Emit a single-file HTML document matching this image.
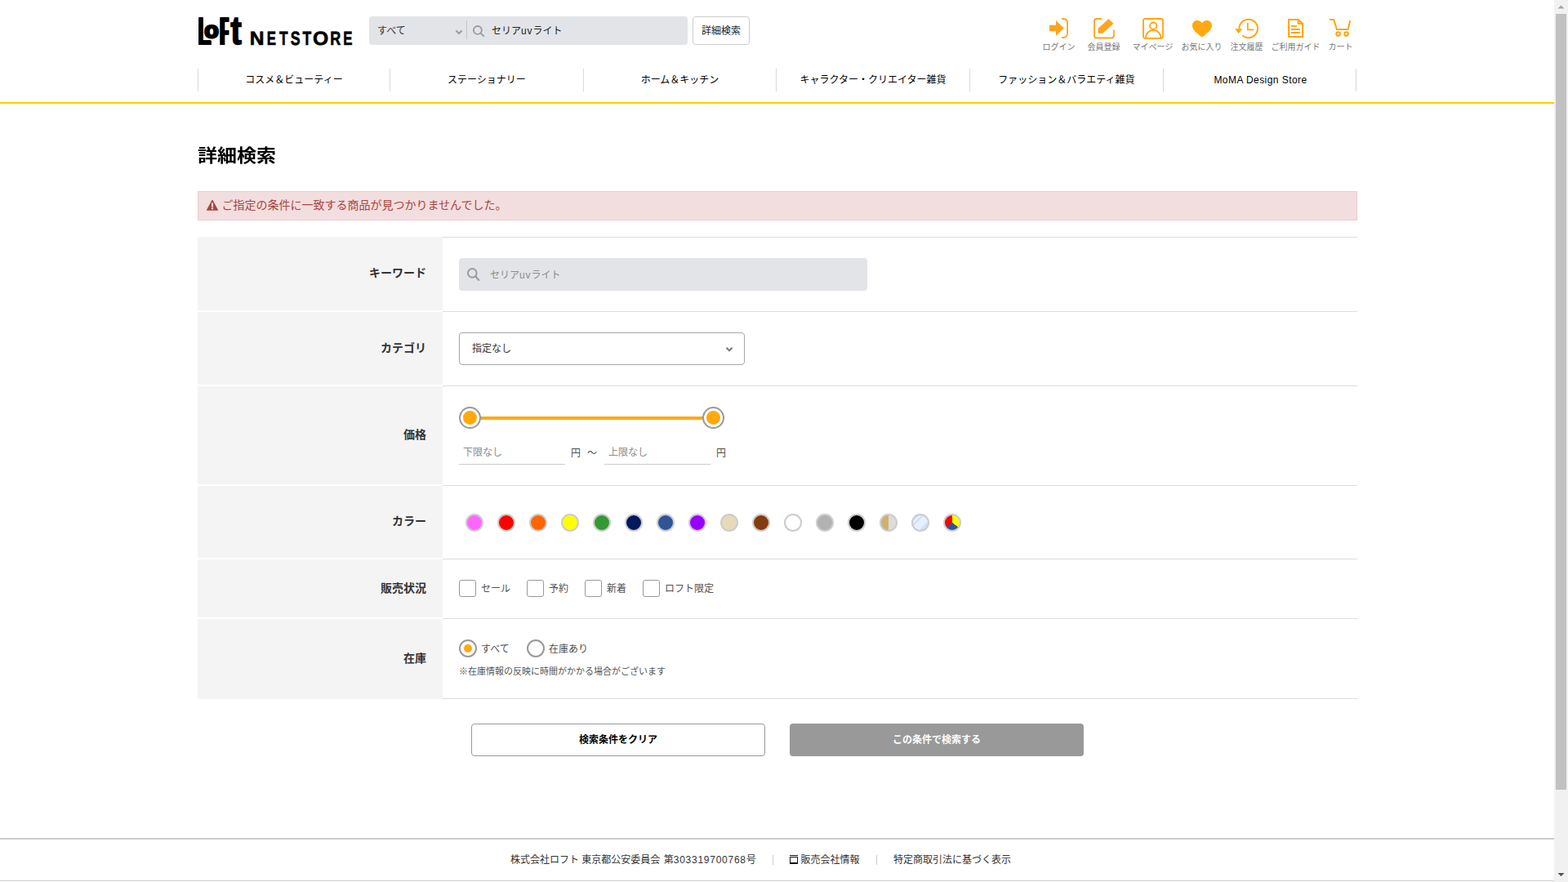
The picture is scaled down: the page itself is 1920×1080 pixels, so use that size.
<!DOCTYPE html>
<html lang="ja">
<head>
<meta charset="utf-8">
<title>詳細検索 | ロフトネットストア</title>
<style>
*{box-sizing:border-box;margin:0;padding:0}
html,body{width:1920px;height:1080px;overflow:hidden;background:#fff}
body{font-family:"Liberation Sans","Noto Sans CJK JP",sans-serif;font-size:12px;color:#222;position:relative}
.abs,#page *{position:absolute}
#page{position:absolute;left:0;top:0;width:1920px;height:1080px;overflow:hidden}
.t{white-space:nowrap;line-height:20px;height:20px;margin-top:1px}
.lt{letter-spacing:0.9px}
/* header */
#sbox{left:452px;top:20px;width:390px;height:35px;background:#e3e4e8;border-radius:4px}
#sbox .sep{left:119px;top:5px;width:1px;height:23px;background:#c4c5c9}
#sbtn{left:848px;top:20px;width:70px;height:35px;border:1px solid #ccc;border-radius:4px;background:#fff}
.hi{top:20px;height:30px}
.hl{top:51px;font-size:10px;color:#787878;line-height:14px;height:14px;white-space:nowrap;text-align:center;transform:translateX(-50%)}
/* nav */
.nsep{top:84px;width:1px;height:28px;background:#d9d9d9}
.nt{top:88px;width:236px;text-align:center;font-size:12px;line-height:20px;color:#000;white-space:nowrap}
#yline{left:0;top:125px;width:1903px;height:2px;background:#fdce00}
/* title */
#title{left:242px;top:173px;font-size:24px;font-weight:bold;line-height:36px;color:#000;white-space:nowrap;transform:scaleY(0.89);transform-origin:50% 47%}
#alert{left:242px;top:234px;width:1420px;height:36px;background:#f2dede;border:1px solid #ebccd1}
#alert .t{left:28.5px;top:3.5px;font-size:14px;color:#a94442;line-height:22px;height:22px}
/* form */
.lab{left:242px;width:300px;background:#f4f4f4}
.lab span{right:20px;font-size:14px;font-weight:bold;color:#333;line-height:20px;white-space:nowrap}
.ln{left:542px;width:1120px;height:1px;background:#ddd}
.pin{width:130px;height:30px;border-bottom:1px solid #ccc}
.cc{width:22px;height:22px;border-radius:50%;border:2px solid #ccc}
.cb{width:21px;height:21px;border:1px solid #999;border-radius:3px;background:#fff}
.rd{width:22px;height:22px;border:2px solid #999;border-radius:50%;background:#fff}
.rd i{left:4px;top:4px;width:10px;height:10px;border-radius:50%;background:#ffa90e}
/* footer */
#fline{left:0;top:1026px;width:1903px;height:2px;background:#ccc}
#fline2{left:0;top:1078px;width:1903px;height:1px;background:#ccc}
.ft{top:1043px;font-size:12px;line-height:20px;color:#333;white-space:nowrap}
/* scrollbar */
#sb{left:1903px;top:0;width:17px;height:1080px;background:#f1f1f1}
#sb .th{left:2px;top:17px;width:13px;height:950px;background:#c1c1c1}
</style>
</head>
<body>
<div id="page">

<!-- HEADER -->
<svg id="logo" style="left:238px;top:14px" width="200" height="46" viewBox="0 0 200 46" font-family="Liberation Sans, sans-serif" fill="#000"><g style="filter:drop-shadow(1px 0 0 #000) drop-shadow(-1px 0 0 #000)"><text transform="matrix(1.3494 0 0 2.4600 4.14 40.80)" font-size="20" font-weight="bold" text-rendering="geometricPrecision">L</text></g><text transform="matrix(1.4361 0 0 1.3734 12.33 32.03)" font-size="20" font-weight="bold" text-rendering="geometricPrecision" stroke="#000" stroke-width="1.9" vector-effect="non-scaling-stroke" stroke-linejoin="miter" stroke-miterlimit="1.5">o</text><g style="filter:drop-shadow(1px 0 0 #000) drop-shadow(1px 0 0 #000) drop-shadow(-1px 0 0 #000) drop-shadow(-1px 0 0 #000)"><text transform="matrix(0.7343 0 0 2.4600 32.27 40.80)" font-size="20" font-weight="bold" text-rendering="geometricPrecision">F</text></g><text transform="matrix(2.0577 0 0 2.4580 44.30 39.87)" font-size="20" font-weight="bold" text-rendering="geometricPrecision" stroke="#000" stroke-width="0.6" vector-effect="non-scaling-stroke" stroke-linejoin="miter" stroke-miterlimit="1.5">t</text><text transform="matrix(1.2290 0 0 1.1737 67.63 40.52)" font-size="20" font-weight="bold" text-rendering="geometricPrecision" stroke="#000" stroke-width="0.55" vector-effect="non-scaling-stroke" stroke-linejoin="miter" stroke-miterlimit="1.5">N</text><text transform="matrix(0.8422 0 0 1.1737 88.75 40.52)" font-size="20" font-weight="bold" text-rendering="geometricPrecision" stroke="#000" stroke-width="0.55" vector-effect="non-scaling-stroke" stroke-linejoin="miter" stroke-miterlimit="1.5">E</text><text transform="matrix(0.8618 0 0 1.1737 103.98 40.52)" font-size="20" font-weight="bold" text-rendering="geometricPrecision" stroke="#000" stroke-width="0.55" vector-effect="non-scaling-stroke" stroke-linejoin="miter" stroke-miterlimit="1.5">T</text><text transform="matrix(0.8888 0 0 1.1829 117.76 40.59)" font-size="20" font-weight="bold" text-rendering="geometricPrecision" stroke="#000" stroke-width="0.55" vector-effect="non-scaling-stroke" stroke-linejoin="miter" stroke-miterlimit="1.5">S</text><text transform="matrix(0.8788 0 0 1.1737 132.38 40.52)" font-size="20" font-weight="bold" text-rendering="geometricPrecision" stroke="#000" stroke-width="0.55" vector-effect="non-scaling-stroke" stroke-linejoin="miter" stroke-miterlimit="1.5">T</text><text transform="matrix(1.2342 0 0 1.1829 145.06 40.59)" font-size="20" font-weight="bold" text-rendering="geometricPrecision" stroke="#000" stroke-width="0.55" vector-effect="non-scaling-stroke" stroke-linejoin="miter" stroke-miterlimit="1.5">O</text><text transform="matrix(0.9019 0 0 1.1737 166.27 40.52)" font-size="20" font-weight="bold" text-rendering="geometricPrecision" stroke="#000" stroke-width="0.55" vector-effect="non-scaling-stroke" stroke-linejoin="miter" stroke-miterlimit="1.5">R</text><text transform="matrix(0.8422 0 0 1.1737 182.15 40.52)" font-size="20" font-weight="bold" text-rendering="geometricPrecision" stroke="#000" stroke-width="0.55" vector-effect="non-scaling-stroke" stroke-linejoin="miter" stroke-miterlimit="1.5">E</text></svg>
<div id="sbox">
  <div class="t" style="left:10px;top:7px;font-size:12px;color:#333">すべて</div>
  <svg style="left:105px;top:16px" width="10" height="8" viewBox="0 0 10 8"><path d="M1.3 1.4 L4.9 5 L8.6 1.4" fill="none" stroke="#999" stroke-width="2"/></svg>
  <div class="sep"></div>
  <svg style="left:125px;top:10px" width="18" height="18" viewBox="0 0 18 18"><circle cx="7.85" cy="6.9" r="4.95" fill="none" stroke="#9c9c9c" stroke-width="1.9"/><path d="M11.4 10.4 L15.1 14.1" stroke="#9c9c9c" stroke-width="2" stroke-linecap="round"/></svg>
  <div class="t" style="left:150px;top:7px;font-size:12px;color:#222">セリア<span class="lt" style="position:static">uv</span>ライト</div>
</div>
<div id="sbtn"><div class="t" style="left:0;top:6px;width:68px;text-align:center;font-size:12px;color:#222">詳細検索</div></div>
<svg class="hi" style="left:1284px" width="26" height="30" viewBox="0 0 26 30"><path d="M1 10.8 H9 V5 L18.8 14.5 L9 24 V18.2 H1 Z" fill="#fba51f"/><path d="M16.2 3 H18 Q23 3 23 8.5 V20.5 Q23 26 18 26 H16.2" fill="none" stroke="#fba51f" stroke-width="1.8"/></svg>
<div class="hl" style="left:1296.5px">ログイン</div>
<svg class="hi" style="left:1338px" width="28" height="30" viewBox="0 0 28 30"><path d="M11 3 H5 Q2 3 2 6 V23.5 Q2 26.5 5 26.5 H23 Q26 26.5 26 23.5 V16.5" fill="none" stroke="#fba51f" stroke-width="1.8"/><path d="M6.5 20.7 V14.9 L19.5 3 L25.4 9 L12.3 20.7 Z" fill="#fba51f"/></svg>
<div class="hl" style="left:1351.5px">会員登録</div>
<svg class="hi" style="left:1398px" width="28" height="30" viewBox="0 0 28 30"><rect x="2" y="3" width="24" height="23.8" rx="2" fill="none" stroke="#ffa40a" stroke-width="1.8"/><circle cx="14.2" cy="11.7" r="4.2" fill="none" stroke="#ffa40a" stroke-width="1.8"/><path d="M5 26.6 C5 20.6 9 17 14.2 17 C19.4 17 23.4 20.6 23.4 26.6" fill="none" stroke="#ffa40a" stroke-width="1.8"/></svg>
<div class="hl" style="left:1411.5px">マイページ</div>
<svg class="hi" style="left:1459px" width="26" height="30" viewBox="0 0 26 30"><path d="M12.9 24.9 Q11.5 24.9 9.9 23.4 C6 20 0.9 16.5 0.9 11 C0.9 7.5 3.7 4.9 7 4.9 C9.6 4.9 11.6 6.2 12.9 8.3 C14.2 6.2 16.2 4.9 18.8 4.9 C22.1 4.9 24.9 7.5 24.9 11 C24.9 16.5 19.8 20 15.9 23.4 Q14.3 24.9 12.9 24.9 Z" fill="#ffa90e"/></svg>
<div class="hl" style="left:1471.5px">お気に入り</div>
<svg class="hi" style="left:1511px" width="32" height="30" viewBox="0 0 32 30"><path d="M6.5 15.4 A11.25 11.25 0 1 1 10.3 23.4" fill="none" stroke="#ffa40a" stroke-width="1.9"/><path d="M1 15.2 H10.4 L5.7 21 Z" fill="#ffa40a"/><path d="M16.8 8 V16.4 H23.9" fill="none" stroke="#ffa40a" stroke-width="1.7"/></svg>
<div class="hl" style="left:1526.5px">注文履歴</div>
<svg class="hi" style="left:1575px" width="24" height="30" viewBox="0 0 24 30"><path d="M3.1 3.9 H14.4 L20.1 9 V24.95 H3.1 Z" fill="none" stroke="#ffa40a" stroke-width="2"/><path d="M14 3.9 V9.4 H20.1 Z" fill="#ffa40a" stroke="#ffa40a" stroke-width="0.8"/><circle cx="15.9" cy="7.5" r="0.7" fill="#fff"/><path d="M6 11.9 H13 M6 16 H16.9 M6 20 H16.9" stroke="#ffa40a" stroke-width="1.9"/></svg>
<div class="hl" style="left:1586.5px">ご利用ガイド</div>
<svg class="hi" style="left:1627px" width="28" height="30" viewBox="0 0 28 30"><path d="M1 4 H6.2 L9.9 16 H23.6 L26.3 5.2" fill="none" stroke="#ffa40a" stroke-width="2"/><circle cx="11.6" cy="21.5" r="2.35" fill="none" stroke="#ffa40a" stroke-width="2"/><circle cx="21.5" cy="21.5" r="2.35" fill="none" stroke="#ffa40a" stroke-width="2"/></svg>
<div class="hl" style="left:1641.5px">カート</div>
<div class="nsep" style="left:242px"></div>
<div class="nsep" style="left:477px"></div>
<div class="nsep" style="left:714px"></div>
<div class="nsep" style="left:950px"></div>
<div class="nsep" style="left:1187px"></div>
<div class="nsep" style="left:1424px"></div>
<div class="nsep" style="left:1660px"></div>
<div class="nt" style="left:243px;width:234px">コスメ＆ビューティー</div>
<div class="nt" style="left:478px;width:236px">ステーショナリー</div>
<div class="nt" style="left:715px;width:235px">ホーム＆キッチン</div>
<div class="nt" style="left:951px;width:236px">キャラクター・クリエイター雑貨</div>
<div class="nt" style="left:1188px;width:236px">ファッション＆バラエティ雑貨</div>
<div class="nt" style="left:1426px;top:88px;width:235px;letter-spacing:0.44px">MoMA Design Store</div>

<div id="yline"></div>

<!-- MAIN -->
<div id="title">詳細検索</div>
<div id="alert"><svg style="left:8.5px;top:8.5px" width="16" height="15" viewBox="0 0 16 15"><path d="M8 1 L14.6 13.2 H1.4 Z" fill="#a94442" stroke="#a94442" stroke-width="1" stroke-linejoin="round"/><rect x="6.9" y="4.4" width="2.2" height="5" fill="#f2dede"/><rect x="6.9" y="10.3" width="2.2" height="2" fill="#f2dede"/></svg><div class="t">ご指定の条件に一致する商品が見つかりませんでした。</div></div>
<div class="lab" style="top:290px;height:90px"><span style="top:33.5px">キーワード</span></div>
<div class="lab" style="top:382px;height:89px"><span style="top:33.5px">カテゴリ</span></div>
<div class="lab" style="top:473px;height:120px"><span style="top:49px">価格</span></div>
<div class="lab" style="top:595px;height:88px"><span style="top:33px">カラー</span></div>
<div class="lab" style="top:685px;height:71px"><span style="top:25px">販売状況</span></div>
<div class="lab" style="top:758px;height:98px"><span style="top:38px">在庫</span></div>
<div class="ln" style="top:290px"></div>
<div class="ln" style="top:381px"></div>
<div class="ln" style="top:472px"></div>
<div class="ln" style="top:594px"></div>
<div class="ln" style="top:684px"></div>
<div class="ln" style="top:757px"></div>
<div class="ln" style="top:855px"></div>
<div style="left:562px;top:316px;width:500px;height:40px;background:#e3e4e8;border-radius:4px">
  <svg style="left:9px;top:11px" width="18" height="18" viewBox="0 0 18 18"><circle cx="7.3" cy="7.4" r="5.35" fill="none" stroke="#999" stroke-width="1.9"/><path d="M11.3 11.5 L15.3 16" stroke="#999" stroke-width="2" stroke-linecap="round"/></svg>
  <div class="t" style="left:38px;top:10px;font-size:12px;color:#8c8c8c">セリア<span class="lt" style="position:static">uv</span>ライト</div>
</div>
<div style="left:562px;top:407px;width:350px;height:40px;background:#fff;border:1px solid #a6a6a6;border-radius:4px">
  <div class="t" style="left:15px;top:8px;font-size:12px;color:#333">指定なし</div>
  <svg style="left:325px;top:16px" width="10" height="8" viewBox="0 0 10 8"><path d="M1.5 1.8 L5 5.4 L8.5 1.8" fill="none" stroke="#777" stroke-width="2"/></svg>
</div>
<div style="left:575px;top:510px;width:298px;height:4px;background:#fcaa12"></div>
<svg style="left:562px;top:498px" width="27" height="27" viewBox="0 0 27 27"><circle cx="13.5" cy="13.5" r="12.5" fill="#fff" stroke="#999" stroke-width="2"/><circle cx="13.5" cy="13.5" r="8.5" fill="#ffa90e"/></svg>
<svg style="left:860px;top:498px" width="27" height="27" viewBox="0 0 27 27"><circle cx="13.5" cy="13.5" r="12.5" fill="#fff" stroke="#999" stroke-width="2"/><circle cx="13.5" cy="13.5" r="8.5" fill="#ffa90e"/></svg>
<div class="pin" style="left:562px;top:539px"><div class="t" style="left:5px;top:4px;font-size:12px;color:#8c8c8c">下限なし</div></div>
<div class="t" style="left:699px;top:544px;font-size:12px;color:#505050">円</div>
<div class="t" style="left:719px;top:544px;font-size:12px;color:#505050">～</div>
<div class="pin" style="left:740px;top:539px"><div class="t" style="left:5px;top:4px;font-size:12px;color:#8c8c8c">上限なし</div></div>
<div class="t" style="left:877px;top:544px;font-size:12px;color:#505050">円</div>
<div class="cc" style="left:570px;top:629px;background:#ff66ff"></div>
<div class="cc" style="left:609px;top:629px;background:#ff0000"></div>
<div class="cc" style="left:648px;top:629px;background:#ff6600"></div>
<div class="cc" style="left:687px;top:629px;background:#ffff00"></div>
<div class="cc" style="left:726px;top:629px;background:#339933"></div>
<div class="cc" style="left:765px;top:629px;background:#001a5c"></div>
<div class="cc" style="left:804px;top:629px;background:#2f5597"></div>
<div class="cc" style="left:843px;top:629px;background:#9900ff"></div>
<div class="cc" style="left:882px;top:629px;background:#e8d9b9"></div>
<div class="cc" style="left:921px;top:629px;background:#843c0c"></div>
<div class="cc" style="left:960px;top:629px;background:#ffffff"></div>
<div class="cc" style="left:999px;top:629px;background:#b2b2b2"></div>
<div class="cc" style="left:1038px;top:629px;background:#000000"></div>
<div class="cc" style="left:1077px;top:629px;background:linear-gradient(90deg,#d1b06b 0 50%,#dcdcdc 50% 100%)"></div>
<div class="cc" style="left:1116px;top:629px;background:linear-gradient(135deg,#cfe1fb 0 22%,#e6f0fd 22% 30%,#cfe1fb 30% 38%,#e6f0fd 38% 72%,#cfe1fb 72% 100%)"></div>
<div class="cc" style="left:1155px;top:629px;background:conic-gradient(#ffff00 0 126deg,#2f5597 126deg 234deg,#ff0000 234deg 360deg)"></div>
<div class="cb" style="left:562px;top:710px"></div><div class="t" style="left:589px;top:710px;font-size:12px;color:#505050">セール</div>
<div class="cb" style="left:645px;top:710px"></div><div class="t" style="left:672px;top:710px;font-size:12px;color:#505050">予約</div>
<div class="cb" style="left:716px;top:710px"></div><div class="t" style="left:743px;top:710px;font-size:12px;color:#505050">新着</div>
<div class="cb" style="left:787px;top:710px"></div><div class="t" style="left:814px;top:710px;font-size:12px;color:#505050">ロフト限定</div>
<div class="rd" style="left:562px;top:783px"><i></i></div><div class="t" style="left:589px;top:784px;font-size:12px;color:#505050">すべて</div>
<div class="rd" style="left:645px;top:783px"></div><div class="t" style="left:672px;top:784px;font-size:12px;color:#505050">在庫あり</div>
<div class="t" style="left:562px;top:811px;font-size:11px;color:#555">※在庫情報の反映に時間がかかる場合がございます</div>

<div style="left:577px;top:886px;width:360px;height:40px;border:1px solid #999;border-radius:4px;background:#fff"><div class="t" style="left:0;top:8px;width:358px;text-align:center;font-size:12px;font-weight:bold;color:#000">検索条件をクリア</div></div>
<div style="left:967px;top:886px;width:360px;height:40px;border-radius:4px;background:#999"><div class="t" style="left:0;top:9px;width:360px;text-align:center;font-size:12px;font-weight:bold;color:#fff">この条件で検索する</div></div>

<!-- FOOTER -->
<div id="fline"></div>
<div class="ft" style="left:625px">株式会社ロフト 東京都公安委員会<span style="position:static;letter-spacing:1px"> </span>第<span style="position:static;letter-spacing:0.75px">303319700768</span>号</div>
<div class="abs" style="left:946px;top:1047px;width:1px;height:12px;background:#ccc"></div>
<svg style="left:967px;top:1047px" width="10" height="11" viewBox="0 0 10 11" shape-rendering="crispEdges"><rect x="0" y="0" width="10" height="1" fill="#111"/><rect x="0" y="2" width="10" height="9" fill="#111"/><rect x="1" y="3" width="8" height="6" fill="#fff"/></svg>
<div class="ft" style="left:980.5px">販売会社情報</div>
<div class="abs" style="left:1073px;top:1047px;width:1px;height:12px;background:#ccc"></div>
<div class="ft" style="left:1094px">特定商取引法に基づく表示</div>
<div id="fline2"></div>

<!-- SCROLLBAR -->
<div id="sb">
  <div class="th"></div>
  <svg style="left:0;top:0" width="17" height="17" viewBox="0 0 17 17"><path d="M4.5 10.5 L8.5 6.5 L12.5 10.5 Z" fill="#a3a3a3"/></svg>
  <svg style="left:0;top:1063px" width="17" height="17" viewBox="0 0 17 17"><path d="M4.5 6 L8.5 10 L12.5 6 Z" fill="#505050"/></svg>
</div>

</div>
</body>
</html>
